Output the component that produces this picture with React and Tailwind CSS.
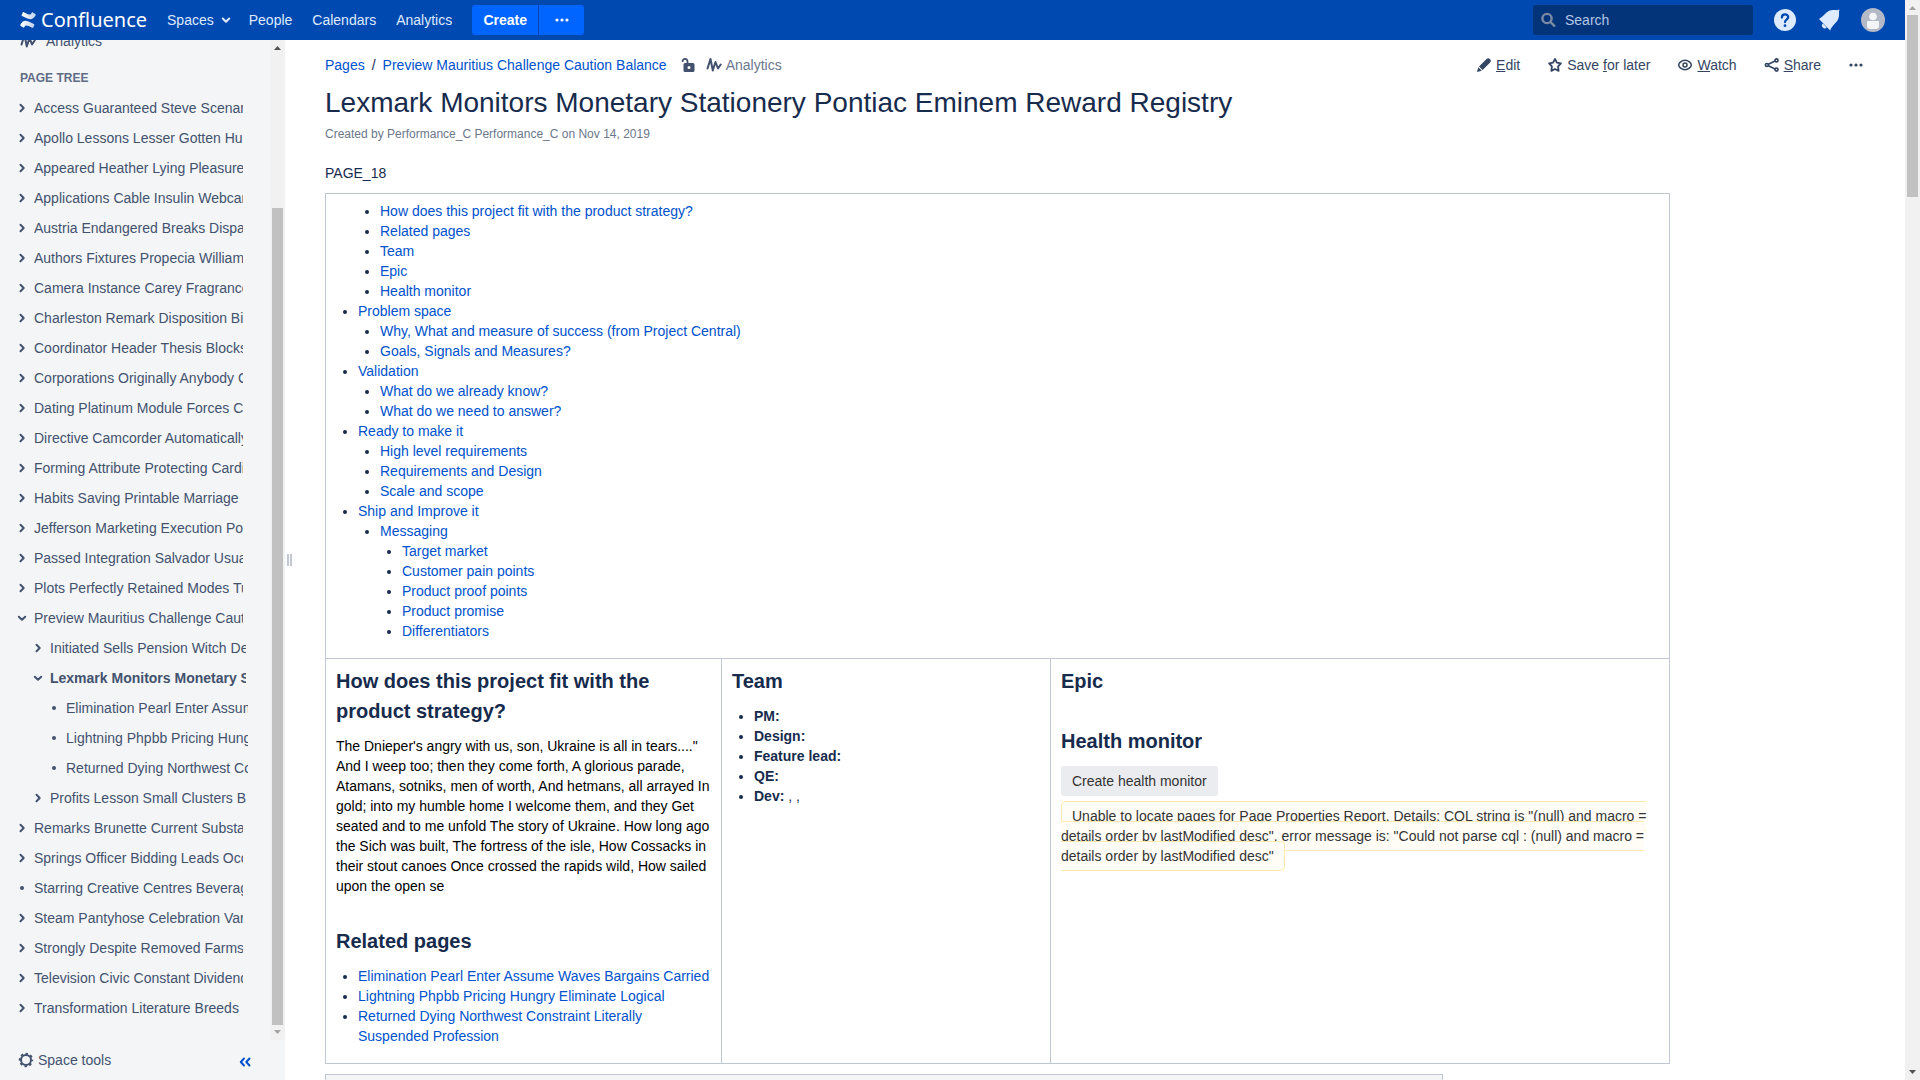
import React from "react";

const tree = [
  [0, "r", "Access Guaranteed Steve Scenarios"],
  [0, "r", "Apollo Lessons Lesser Gotten Hundred"],
  [0, "r", "Appeared Heather Lying Pleasure"],
  [0, "r", "Applications Cable Insulin Webcam"],
  [0, "r", "Austria Endangered Breaks Dispatch"],
  [0, "r", "Authors Fixtures Propecia Williams"],
  [0, "r", "Camera Instance Carey Fragrances"],
  [0, "r", "Charleston Remark Disposition Bind"],
  [0, "r", "Coordinator Header Thesis Blocks"],
  [0, "r", "Corporations Originally Anybody Cell"],
  [0, "r", "Dating Platinum Module Forces Cold"],
  [0, "r", "Directive Camcorder Automatically"],
  [0, "r", "Forming Attribute Protecting Cardiff"],
  [0, "r", "Habits Saving Printable Marriage"],
  [0, "r", "Jefferson Marketing Execution Pole"],
  [0, "r", "Passed Integration Salvador Usually"],
  [0, "r", "Plots Perfectly Retained Modes Tune"],
  [0, "d", "Preview Mauritius Challenge Caution Balance"],
  [1, "r", "Initiated Sells Pension Witch Detail"],
  [1, "d", "Lexmark Monitors Monetary Stationery", true],
  [2, "b", "Elimination Pearl Enter Assume Waves"],
  [2, "b", "Lightning Phpbb Pricing Hungry"],
  [2, "b", "Returned Dying Northwest Constraint"],
  [1, "r", "Profits Lesson Small Clusters Bone"],
  [0, "r", "Remarks Brunette Current Substance"],
  [0, "r", "Springs Officer Bidding Leads Occur"],
  [0, "b", "Starring Creative Centres Beverages"],
  [0, "r", "Steam Pantyhose Celebration Variety"],
  [0, "r", "Strongly Despite Removed Farms"],
  [0, "r", "Television Civic Constant Dividends"],
  [0, "r", "Transformation Literature Breeds"],
];

const indent = ["pl-4 pr-[27px]", "pl-8 pr-6", "pl-12 pr-[22px]"];

function Chevron({ kind }) {
  return (
    <svg viewBox="0 0 12 12" className="size-3 shrink-0" fill="none" stroke="currentColor" strokeWidth="2" strokeLinecap="round" strokeLinejoin="round" aria-hidden="true">
      {kind === "r" && <path d="M4.500 2.800 7.700 6 4.500 9.200" />}
      {kind === "d" && <path d="M2.800 4.800 6 7.800 9.200 4.800" />}
      {kind === "b" && <circle cx="6" cy="6" r="2" fill="currentColor" stroke="none" />}
    </svg>
  );
}

function Pulse({ className }) {
  return (
    <svg viewBox="0 0 16 16" className={className} fill="none" stroke="currentColor" strokeWidth="2" strokeLinecap="round" strokeLinejoin="round" aria-hidden="true">
      <path d="M1.500 11.500 4.500 2 6.800 13.500 9.500 5 12 11.500 14.700 7.500" />
    </svg>
  );
}

function Dots({ className }) {
  return (
    <svg viewBox="0 0 16 16" className={className} fill="currentColor" aria-hidden="true">
      <circle cx="3" cy="8" r="1.600" />
      <circle cx="8" cy="8" r="1.600" />
      <circle cx="13" cy="8" r="1.600" />
    </svg>
  );
}

function Scrollbar({ thumb, upColor, downColor }) {
  return (
    <div className="flex w-[15px] shrink-0 flex-col items-center bg-[#f1f1f1]" aria-hidden="true">
      <svg viewBox="0 0 15 15" className="size-[15px] shrink-0"><path d="M4 10h7L7.500 6z" fill={upColor} /></svg>
      <div className="flex w-[11px] flex-1 flex-col">{thumb}</div>
      <svg viewBox="0 0 15 15" className="size-[15px] shrink-0"><path d="M4 5h7L7.500 9z" fill={downColor} /></svg>
    </div>
  );
}

function Header() {
  return (
    <header className="flex h-10 shrink-0 items-center bg-[#0049b0] px-5 text-[#deebff]">
      <a href="#home" className="flex items-center gap-[5px] text-white" aria-label="Confluence home">
        <svg viewBox="0 0 16 16" className="size-4" aria-hidden="true">
          <defs>
            <linearGradient id="wave" x1="0" x2="1" y1="0" y2="0">
              <stop offset="0" stopColor="#fff" />
              <stop offset="1" stopColor="#fff" stopOpacity=".75" />
            </linearGradient>
          </defs>
          <path fill="url(#wave)" d="M.6 12.200c2.200-3.600 4.600-4.200 8-2.600l5.400 2.500c.4.200.5.500.4.900l-1.200 2.500c-.2.400-.6.500-1 .3-5.600-2.700-6.300-3.300-8-.5-.3.400-.6.500-1 .3L.8 14.100c-.6-.4-.8-.9-.2-1.900z" />
          <path fill="url(#wave)" d="M15.400 3.800c-2.200 3.600-4.600 4.200-8 2.600L2 3.900c-.4-.2-.5-.5-.4-.9L2.800.5c.2-.4.600-.5 1-.3 5.600 2.700 6.300 3.300 8 .5.300-.4.600-.5 1-.3l2.400 1.500c.6.400.8.900.2 1.900z" />
        </svg>
        <span className="font-['Noto_Sans'] text-xl leading-8">Confluence</span>
      </a>
      <nav className="ml-5 flex items-center gap-5">
        <button className="-mr-[3px] flex items-center gap-1.5">
          Spaces
          <svg viewBox="0 0 12 12" className="size-3" fill="none" stroke="currentColor" strokeWidth="2" strokeLinecap="round" strokeLinejoin="round" aria-hidden="true"><path d="M2.800 4.500 6 7.700 9.200 4.500" /></svg>
        </button>
        <a href="#people">People</a>
        <a href="#calendars">Calendars</a>
        <a href="#analytics">Analytics</a>
      </nav>
      <div className="ml-5 flex gap-px">
        <button className="h-[30px] w-[66px] rounded-l-[3px] bg-[#0065ff] font-bold text-white">Create</button>
        <button className="flex h-[30px] w-[45px] items-center justify-center rounded-r-[3px] bg-[#0065ff] text-white" aria-label="More create options"><Dots className="size-4" /></button>
      </div>
      <label className="ml-auto flex h-[30px] w-[220px] items-center gap-2 rounded-[3px] bg-[#03347a] pl-2">
        <svg viewBox="0 0 16 16" className="size-4 shrink-0" fill="none" stroke="#7c8aa3" strokeWidth="2.400" strokeLinecap="round" aria-hidden="true"><circle cx="6" cy="6.500" r="4.600" /><path d="m10 10.500 3.300 3.300" /></svg>
        <input type="search" placeholder="Search" aria-label="Search" className="w-full bg-transparent outline-none placeholder:text-[#b2c7e6]" />
      </label>
      <div className="ml-5 flex items-center gap-5">
        <button aria-label="Help">
          <svg viewBox="0 0 24 24" className="size-6" aria-hidden="true">
            <circle cx="12" cy="12" r="11" fill="#deebff" />
            <path d="M8.900 9.600c0-4.200 6.300-4 6.300-.5 0 2.500-3.200 2.600-3.200 5" fill="none" stroke="#0049b0" strokeWidth="2.300" strokeLinecap="round" />
            <circle cx="12" cy="17.700" r="1.400" fill="#0049b0" />
          </svg>
        </button>
        <button aria-label="Notifications">
          <svg viewBox="0 0 24 24" className="size-6" fill="#deebff" aria-hidden="true">
            <path d="M2 11C7.500 8 8.500 3.500 14 2.300c2.500-.5 4.700-.4 6.500-.1L21.700 1.500l.8.800-.6 1.200c.3 2 .3 4.500-.5 7C20 15 15 17 13.200 22.400z" />
            <path d="M5.800 15.500a2.700 2.700 0 1 0 4 4z" />
          </svg>
        </button>
        <button aria-label="Your profile">
          <svg viewBox="0 0 24 24" className="size-6" aria-hidden="true">
            <circle cx="12" cy="12" r="12" fill="#b3b9c6" />
            <circle cx="12" cy="8.500" r="3.800" fill="#f4f5f7" />
            <path d="M6 14.200c0-.7.500-1.200 1.200-1.200h9.600c.7 0 1.200.5 1.200 1.200V18c0 2-1.200 3-3 3H9c-1.800 0-3-1-3-3z" fill="#f4f5f7" />
          </svg>
        </button>
      </div>
    </header>
  );
}

function Sidebar() {
  return (
    <aside className="flex w-[285px] shrink-0 flex-col bg-[#f4f5f7] text-[#42526e]">
      <div className="flex min-h-0 flex-1">
        <div className="flex min-w-0 flex-1 flex-col justify-end overflow-hidden pb-[17px]">
          <a href="#space-analytics" className="flex h-5 shrink-0 items-center gap-2.5 pl-5">
            <Pulse className="size-4" />
            Analytics
          </a>
          <h2 className="mt-[17px] mb-[5px] shrink-0 pl-5 text-xs leading-5 font-bold text-[#5e6c84]">PAGE TREE</h2>
          <ul className="shrink-0">
            {tree.map(([level, kind, text, current]) => (
              <li key={text} className={`flex h-[30px] items-center gap-1.5 ${indent[level]}`}>
                <Chevron kind={kind} />
                <a href="#page" className={`overflow-hidden whitespace-nowrap ${current ? "font-bold" : ""}`}>{text}</a>
              </li>
            ))}
          </ul>
        </div>
        <Scrollbar
          upColor="#505050"
          downColor="#a3a3a3"
          thumb={<><div className="flex-[153]" /><div className="flex-[817] bg-[#c1c1c1]" /></>}
        />
      </div>
      <div className="flex h-10 shrink-0 items-center justify-between pr-8 pl-[18px]">
        <button className="flex items-center gap-1">
          <svg viewBox="0 0 16 16" className="size-4" fill="none" stroke="currentColor" aria-hidden="true">
            <circle cx="8" cy="8" r="5" strokeWidth="2" />
            <circle cx="8" cy="8" r="6.300" strokeWidth="1.800" strokeDasharray="2.474 2.474" strokeDashoffset="1.237" />
          </svg>
          Space tools
        </button>
        <button className="pt-1 text-[#0052cc]" aria-label="Collapse sidebar">
          <svg viewBox="0 0 16 16" className="size-4" fill="none" stroke="currentColor" strokeWidth="2" strokeLinecap="round" strokeLinejoin="round" aria-hidden="true"><path d="M7 4.500 3.800 8 7 11.500M12.500 4.500 9.300 8l3.200 3.500" /></svg>
        </button>
      </div>
    </aside>
  );
}

const toc = [
  { children: ["How does this project fit with the product strategy?", "Related pages", "Team", "Epic", "Health monitor"] },
  { text: "Problem space", children: ["Why, What and measure of success (from Project Central)", "Goals, Signals and Measures?"] },
  { text: "Validation", children: ["What do we already know?", "What do we need to answer?"] },
  { text: "Ready to make it", children: ["High level requirements", "Requirements and Design", "Scale and scope"] },
  {
    text: "Ship and Improve it",
    children: [{ text: "Messaging", children: ["Target market", "Customer pain points", "Product proof points", "Product promise", "Differentiators"] }],
  },
];

function TocList({ items }) {
  return (
    <ul className="list-disc pl-[22px]">
      {items.map((raw, i) => {
        const item = typeof raw === "string" ? { text: raw } : raw;
        return (
          <li key={i} className={item.text ? "" : "list-none"}>
            {item.text && <a href="#section" className="text-[#0052cc]">{item.text}</a>}
            {item.children && <TocList items={item.children} />}
          </li>
        );
      })}
    </ul>
  );
}

function Action({ icon, children }) {
  return <button className="flex items-center gap-1">{icon}<span>{children}</span></button>;
}

const cell = "border border-[#c1c7d0] px-2.5 py-[7px] align-top";
const heading = "text-xl leading-[30px] font-bold";

function Content() {
  return (
    <main className="min-w-0 flex-1 overflow-hidden pt-[15px] pr-[41px] pl-[33px]">
      <div className="flex items-center justify-between">
        <nav aria-label="Breadcrumb" className="flex items-center text-[#0052cc]">
          <a href="#pages">Pages</a>
          <span className="mx-[7px] text-[#172b4d]">/</span>
          <a href="#parent">Preview Mauritius Challenge Caution Balance</a>
          <button className="ml-[13px] text-[#42526e]" aria-label="Unrestricted">
            <svg viewBox="0 0 16 16" className="size-4" aria-hidden="true">
              <path d="M2.600 5c-.4-4 4.900-4 4.900-.5V7" fill="none" stroke="currentColor" strokeWidth="1.800" />
              <path fill="currentColor" fillRule="evenodd" d="M5 6h8a1.500 1.500 0 0 1 1.500 1.500v6A1.500 1.500 0 0 1 13 15H5a1.500 1.500 0 0 1-1.500-1.500v-6A1.500 1.500 0 0 1 5 6zm4 3a1.500 1.500 0 1 0 0 3 1.500 1.500 0 0 0 0-3z" />
            </svg>
          </button>
          <a href="#page-analytics" className="ml-2.5 flex items-center gap-1 text-[#6b778c]"><Pulse className="size-4 text-[#42526e]" />Analytics</a>
        </nav>
        <div className="flex items-center gap-[27px] text-[#344563]">
          <Action icon={<svg viewBox="0 0 16 16" className="size-4" fill="currentColor" aria-hidden="true"><path d="M3 9.500 10.300 2.200c1.300-1.300 2.400-1.300 3.600-.1 1.300 1.300 1.300 2.400 0 3.700L6.600 13.100zM2.300 10.300l3.500 3.500L1 15z" /></svg>}><u>E</u>dit</Action>
          <Action icon={<svg viewBox="0 0 16 16" className="size-4" fill="none" stroke="currentColor" strokeWidth="1.800" strokeLinejoin="round" aria-hidden="true"><path d="M8 2 9.900 5.600l4 .7-2.800 3 .5 4.600L8 12l-3.600 1.900.5-4.600-2.800-3 4-.7z" /></svg>}>Save <u>f</u>or later</Action>
          <Action icon={<svg viewBox="0 0 16 16" className="size-4" fill="none" stroke="currentColor" strokeWidth="1.500" aria-hidden="true"><path d="M1.700 8c0-2 3-4.700 6.300-4.700S14.300 6 14.300 8 11.300 12.700 8 12.700 1.700 10 1.700 8z" /><circle cx="8" cy="8" r="2" /></svg>}><u>W</u>atch</Action>
          <Action icon={<svg viewBox="0 0 16 16" className="size-4" fill="none" stroke="currentColor" strokeWidth="1.700" aria-hidden="true"><circle cx="2.900" cy="8" r="1.500" /><circle cx="12.500" cy="3.400" r="1.500" /><circle cx="12.500" cy="12.600" r="1.500" /><path d="m4.400 7.300 6.700-3.200M4.400 8.700l6.700 3.200" /></svg>}><u>S</u>hare</Action>
          <button aria-label="More actions"><Dots className="size-4" /></button>
        </div>
      </div>
      <h1 className="mt-3 text-[28px] leading-8">Lexmark Monitors Monetary Stationery Pontiac Eminem Reward Registry</h1>
      <p className="mt-[5px] text-xs leading-5 text-[#6b778c]">Created by Performance_C Performance_C on Nov 14, 2019</p>
      <p className="mt-[19px]">PAGE_18</p>
      <table className="mt-2.5 w-full max-w-[1345px] table-fixed border-collapse">
        <colgroup>
          <col className="w-[396px]" />
          <col className="w-[329px]" />
          <col />
        </colgroup>
        <tbody>
          <tr>
            <td colSpan={3} className={cell}>
              <div className="mb-2.5"><TocList items={toc} /></div>
            </td>
          </tr>
          <tr>
            <td className={cell}>
              <h2 className={heading}>How does this project fit with the product strategy?</h2>
              <p className="mt-2.5 text-black">The Dnieper's angry with us, son, Ukraine is all in tears...." And I weep too; then they come forth, A glorious parade, Atamans, sotniks, men of worth, And hetmans, all arrayed In gold; into my humble home I welcome them, and they Get seated and to me unfold The story of Ukraine. How long ago the Sich was built, The fortress of the isle, How Cossacks in their stout canoes Once crossed the rapids wild, How sailed upon the open se</p>
              <h2 className={`mt-[30px] ${heading}`}>Related pages</h2>
              <ul className="my-2.5 list-disc pl-[22px]">
                <li><a href="#p1" className="text-[#0052cc]">Elimination Pearl Enter Assume Waves Bargains Carried</a></li>
                <li><a href="#p2" className="text-[#0052cc]">Lightning Phpbb Pricing Hungry Eliminate Logical</a></li>
                <li><a href="#p3" className="text-[#0052cc]">Returned Dying Northwest Constraint Literally Suspended Profession</a></li>
              </ul>
            </td>
            <td className={cell}>
              <h2 className={heading}>Team</h2>
              <ul className="mt-2.5 list-disc pl-[22px]">
                <li><strong>PM:</strong></li>
                <li><strong>Design:</strong></li>
                <li><strong>Feature lead:</strong></li>
                <li><strong>QE:</strong></li>
                <li><strong>Dev:</strong> , ,</li>
              </ul>
            </td>
            <td className={cell}>
              <h2 className={heading}>Epic</h2>
              <h2 className={`mt-[30px] ${heading}`}>Health monitor</h2>
              <button className="mt-2.5 block h-[30px] rounded-[3px] bg-[#ebecf0] px-[11px] text-[#333]">Create health monitor</button>
              <p className="mt-2.5">
                <span className="rounded-[5px] border border-[#ffeaae] bg-[#fffdf6] px-2.5 py-1.5 text-[#333]">Unable to locate pages for Page Properties Report. Details: CQL string is "(null) and macro = details order by lastModified desc". error message is: "Could not parse cql : (null) and macro = details order by lastModified desc"</span>
              </p>
            </td>
          </tr>
        </tbody>
      </table>
      <table className="mt-2.5 w-full max-w-[1118px] border-collapse">
        <tbody>
          <tr><td className="h-10 border border-[#c1c7d0] bg-[#f4f5f7]" /></tr>
        </tbody>
      </table>
    </main>
  );
}

export default function App() {
  return (
    <div className="flex h-screen overflow-hidden bg-white font-['Liberation_Sans',Arial,sans-serif] text-sm leading-5 text-[#172b4d]">
      <div className="flex min-w-0 flex-1 flex-col">
        <Header />
        <div className="flex min-h-0 flex-1">
          <Sidebar />
          <div className="flex w-[7px] shrink-0 items-center justify-end gap-px" aria-hidden="true">
            <span className="h-3 w-0.5 bg-[#c1c7d0]" />
            <span className="h-3 w-0.5 bg-[#c1c7d0]" />
          </div>
          <Content />
        </div>
      </div>
      <Scrollbar
        upColor="#a3a3a3"
        downColor="#505050"
        thumb={<div className="h-[182px] bg-[#c1c1c1]" />}
      />
    </div>
  );
}
